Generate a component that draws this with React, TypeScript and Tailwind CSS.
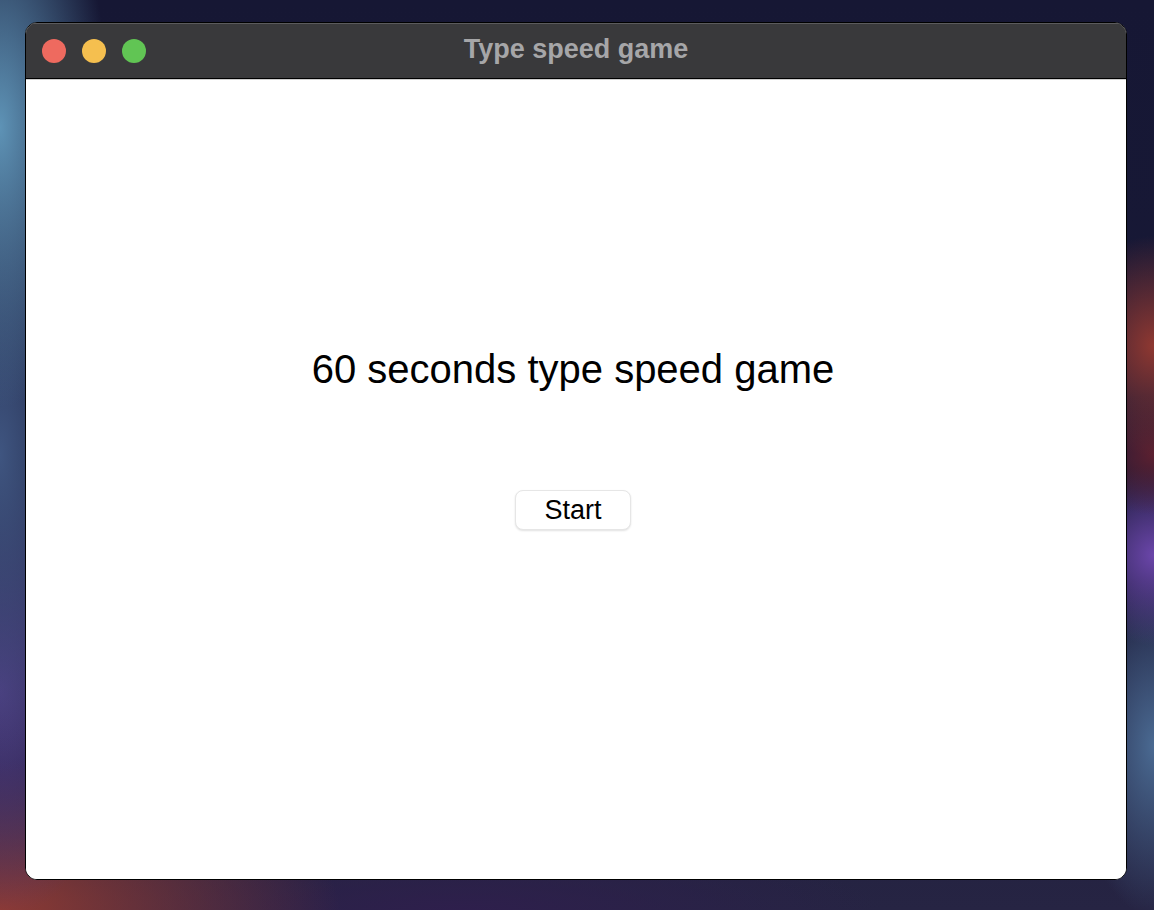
import { memo } from 'react'

// TrafficLights
const TrafficLights = memo(() => {
  return (
    <div className="flex items-center gap-4">
      <span className="block w-6 h-6 rounded-full bg-[#ee6a5f]" />
      <span className="block w-6 h-6 rounded-full bg-[#f5bf4f]" />
      <span className="block w-6 h-6 rounded-full bg-[#61c554]" />
    </div>
  )
})

TrafficLights.displayName = 'TrafficLights'

// App
export default function App() {
  return (
    <div
      className="w-full h-[910px] pl-[25px] pt-[22px] bg-[#191a3a] bg-[image:radial-gradient(ellipse_110px_280px_at_0%_14%,#5e93b6,transparent),radial-gradient(ellipse_100px_320px_at_0%_50%,#3f5580,transparent),radial-gradient(ellipse_120px_230px_at_0%_76%,#4d3a80,transparent),radial-gradient(ellipse_340px_150px_at_0%_100%,#8e3a33,transparent),radial-gradient(ellipse_90px_110px_at_100%_38%,#8f3831,transparent),radial-gradient(ellipse_70px_60px_at_100%_50%,#5c2030,transparent),radial-gradient(ellipse_80px_90px_at_100%_61%,#6b46aa,transparent),radial-gradient(ellipse_80px_170px_at_100%_82%,#4a6a92,transparent),radial-gradient(ellipse_420px_70px_at_40%_100%,#2e1f4c,transparent),linear-gradient(to_bottom,#161734,#181937_50%,#262443)]"
      style={{ fontFamily: '"Liberation Sans", Arial, sans-serif' }}
    >
      <div className="flex flex-col w-[1102px] h-[858px] rounded-[12px] overflow-hidden border border-black bg-white">
        {/* title bar */}
        <div className="relative flex items-center shrink-0 h-[56px] px-4 bg-[#39393b] border-t border-[#5b5b5d] border-b border-b-black">
          <TrafficLights />
          <div className="absolute inset-0 flex items-center justify-center pb-[3px] pointer-events-none">
            <span className="text-[27px] font-bold text-[#a6a6a8] leading-none">Type speed game</span>
          </div>
        </div>

        {/* content */}
        <div className="flex flex-col items-center grow pt-[269px] pr-[6px] border-t border-[#cfcfcf] bg-white">
          <h1 className="text-[40px] leading-none text-black">60 seconds type speed game</h1>
          <button className="mt-[101px] w-[116px] h-[40px] rounded-[8px] bg-white border border-[#e6e6e6] shadow-[0_1px_2px_rgba(0,0,0,0.12)] text-[27px] leading-none text-black">
            Start
          </button>
        </div>
      </div>
    </div>
  )
}
